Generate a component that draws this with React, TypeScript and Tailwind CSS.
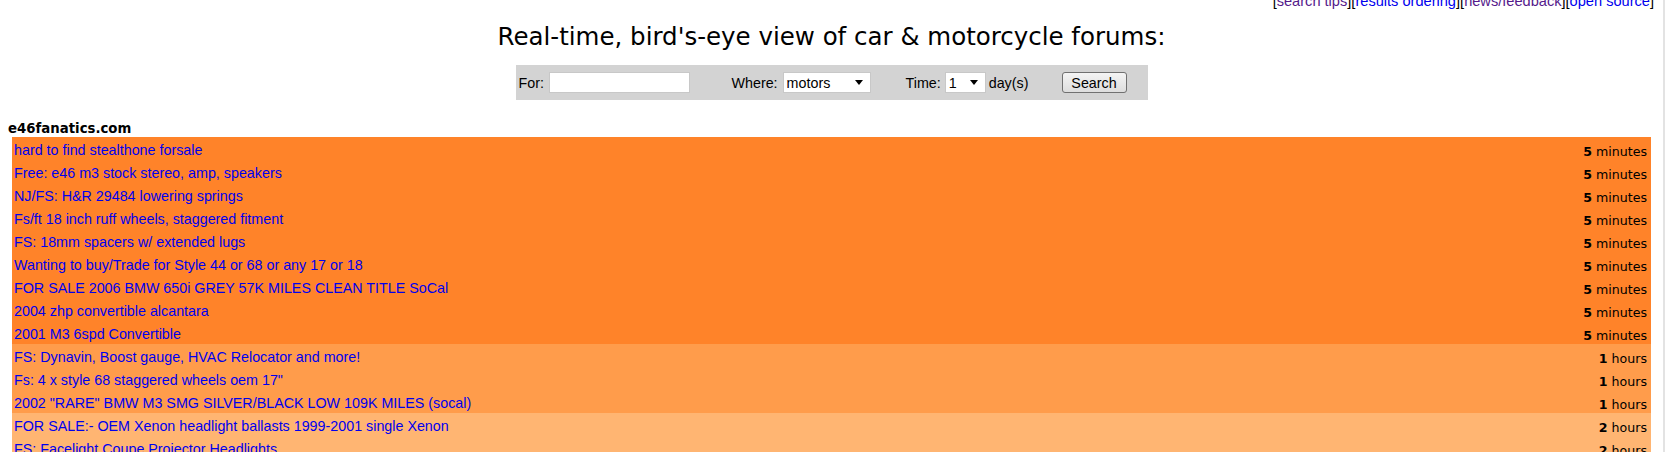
import React from "react";

type Post = { title: string; n: number; unit: string; tone: 0 | 1 | 2 };

const POSTS: Post[] = [
  { title: "hard to find stealthone forsale", n: 5, unit: "minutes", tone: 0 },
  { title: "Free: e46 m3 stock stereo, amp, speakers", n: 5, unit: "minutes", tone: 0 },
  { title: "NJ/FS: H&R 29484 lowering springs", n: 5, unit: "minutes", tone: 0 },
  { title: "Fs/ft 18 inch ruff wheels, staggered fitment", n: 5, unit: "minutes", tone: 0 },
  { title: "FS: 18mm spacers w/ extended lugs", n: 5, unit: "minutes", tone: 0 },
  { title: "Wanting to buy/Trade for Style 44 or 68 or any 17 or 18", n: 5, unit: "minutes", tone: 0 },
  { title: "FOR SALE 2006 BMW 650i GREY 57K MILES CLEAN TITLE SoCal", n: 5, unit: "minutes", tone: 0 },
  { title: "2004 zhp convertible alcantara", n: 5, unit: "minutes", tone: 0 },
  { title: "2001 M3 6spd Convertible", n: 5, unit: "minutes", tone: 0 },
  { title: "FS: Dynavin, Boost gauge, HVAC Relocator and more!", n: 1, unit: "hours", tone: 1 },
  { title: 'Fs: 4 x style 68 staggered wheels oem 17"', n: 1, unit: "hours", tone: 1 },
  { title: '2002 "RARE" BMW M3 SMG SILVER/BLACK LOW 109K MILES (socal)', n: 1, unit: "hours", tone: 1 },
  { title: "FOR SALE:- OEM Xenon headlight ballasts 1999-2001 single Xenon", n: 2, unit: "hours", tone: 2 },
  { title: "FS: Facelight Coupe Projector Headlights", n: 2, unit: "hours", tone: 2 },
  { title: "E46 M3 OEM exhaust for sale", n: 2, unit: "hours", tone: 2 },
];

const TONES = ["bg-[#ff8329]", "bg-[#ff9c4b]", "bg-[#ffb572]"];

const arial = "font-['Liberation_Sans',Arial,sans-serif]";
const verdana = "font-['DejaVu_Sans',Verdana,sans-serif]";

function Caret() {
  return (
    <svg width="8" height="5" viewBox="0 0 8 5" aria-hidden>
      <path d="M0 0h8L4 5z" fill="#000" />
    </svg>
  );
}

function FakeSelect({ value, width }: { value: string; width: string }) {
  return (
    <span
      className={`flex h-[21px] items-center justify-between border border-[#c8c8c8] bg-white pl-[3px] pr-[7px] text-[14.3px] leading-[16px] text-black ${width}`}
    >
      {value}
      <Caret />
    </span>
  );
}

function TopLinks() {
  const links = [
    { label: "search tips", visited: true },
    { label: "results ordering", visited: false },
    { label: "news/feedback", visited: true },
    { label: "open source", visited: false },
  ];
  return (
    <div className={`-mt-[7px] pr-[9px] text-right text-[14.6px] leading-[16px] text-black ${arial}`}>
      {links.map((l) => (
        <span key={l.label}>
          [<a href="#" className={l.visited ? "text-[#551a8b]" : "text-[#0000ee]"}>{l.label}</a>]
        </span>
      ))}
    </div>
  );
}

function SearchBar() {
  return (
    <div className={`mx-auto mt-[14px] flex h-[35px] w-[632px] items-center bg-[#d3d3d3] text-[14.3px] leading-[16px] text-black ${arial}`}>
      <div className="flex w-[216px] items-center gap-[5px] pl-[3px]">
        <span>For:</span>
        <span className="h-[21px] w-[141px] border border-[#c8c8c8] bg-white" />
      </div>
      <div className="flex w-[174px] items-center gap-[5px]">
        <span>Where:</span>
        <FakeSelect value="motors" width="w-[88px]" />
      </div>
      <div className="flex w-[156px] items-center gap-[3px]">
        <span>Time:</span>
        <FakeSelect value="1" width="w-[41px] ml-[1px]" />
        <span>day(s)</span>
      </div>
      <button className="flex h-[21px] w-[65px] items-center justify-center rounded-[3px] border border-[#707070] bg-[linear-gradient(#f4f4f4,#dddddd)] text-[14.3px]">
        Search
      </button>
    </div>
  );
}

function PostRow({ post }: { post: Post }) {
  return (
    <div className={`flex h-[23px] items-start justify-between ${TONES[post.tone]}`}>
      <a href="#" className={`pl-[2px] pt-[5px] text-[14.3px] leading-[16px] text-[#0000ee] ${arial}`}>
        {post.title}
      </a>
      <span className={`pr-[4px] pt-[7px] text-[12.6px] leading-[15px] text-black ${verdana}`}>
        <b>{post.n}</b> {post.unit}
      </span>
    </div>
  );
}

export default function App() {
  return (
    <div className="flex h-[452px] w-full overflow-hidden bg-white">
      <main className="flex-1">
        <TopLinks />
        <h1 className="mt-[14px] text-center font-['DejaVu_Sans',Verdana,sans-serif] text-[24.5px] font-normal leading-[28px] text-black">
          Real-time, bird's-eye view of car &amp; motorcycle forums:
        </h1>
        <SearchBar />
        <h2 className={`mt-[21px] pl-[8px] text-[13.3px] font-bold leading-[16px] text-black ${verdana}`}>
          e46fanatics.com
        </h2>
        <div className="mx-[12px]">
          {POSTS.map((p) => (
            <PostRow key={p.title} post={p} />
          ))}
        </div>
      </main>
      <div className="w-[2px] bg-[#e3e3e3]" />
    </div>
  );
}
